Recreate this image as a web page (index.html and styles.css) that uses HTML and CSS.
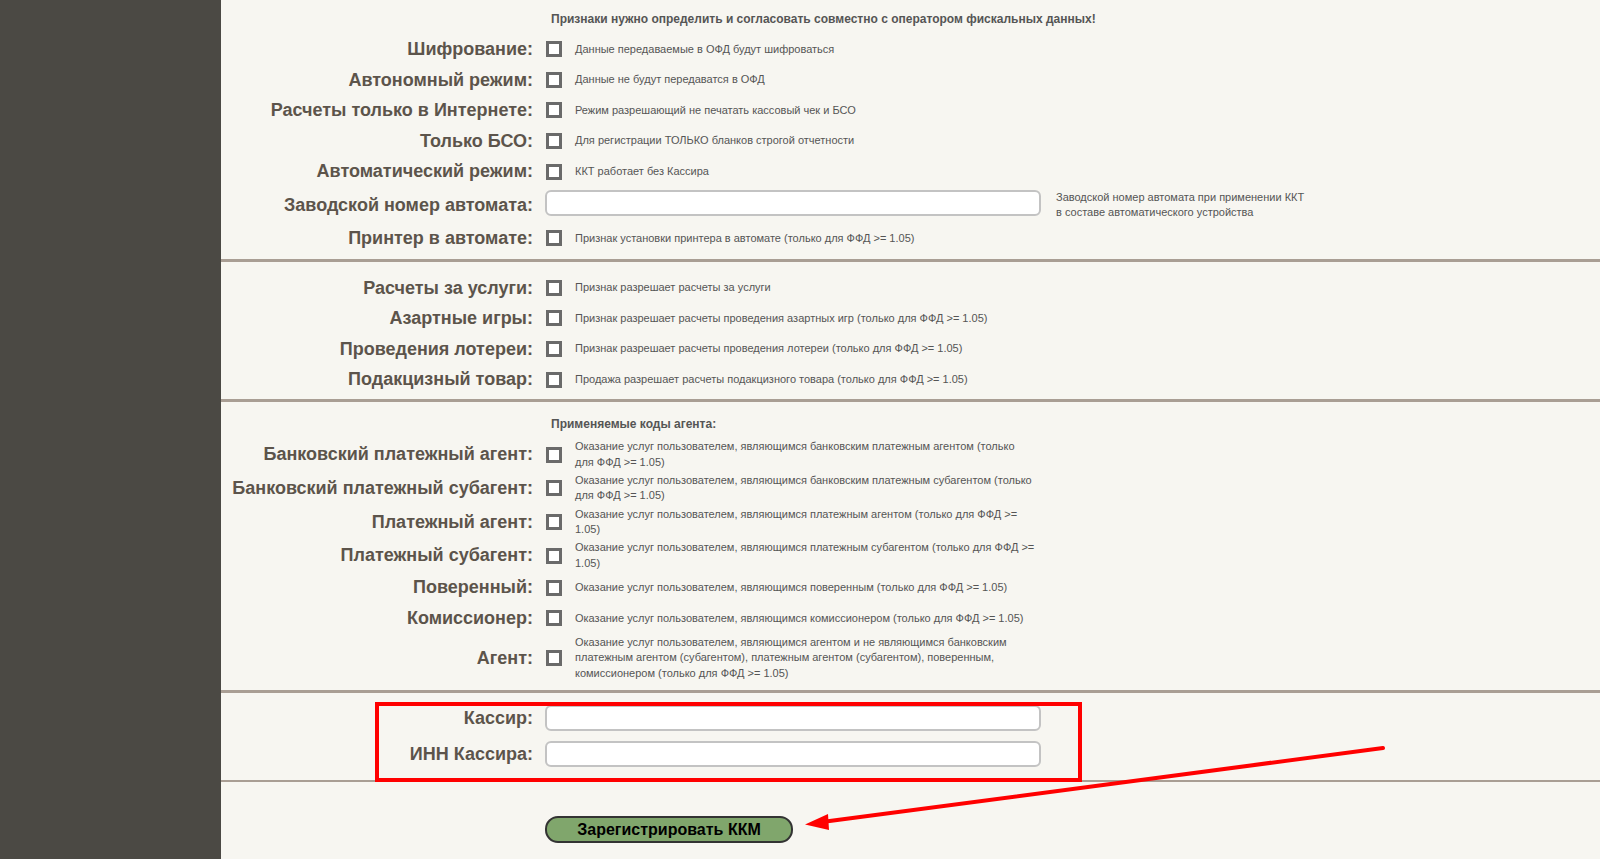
FILE: index.html
```html
<!DOCTYPE html>
<html lang="ru">
<head>
  <meta charset="UTF-8">
  <meta name="viewport" content="width=device-width, initial-scale=1.0">
  <title>Регистрация ККМ</title>
  <link rel="stylesheet" href="styles.css">
</head>
<body>
<div class="page">
  <div class="sidebar"></div>

  <div class="content">

    <div class="section first">
      <div class="row">
        <div></div>
        <div class="caption">Признаки нужно определить и согласовать совместно с оператором фискальных данных!</div>
      </div>
      <div class="row">
        <label class="label">Шифрование:</label>
        <div class="control"><input type="checkbox" class="check"><span class="desc">Данные передаваемые в ОФД будут шифроваться</span></div>
      </div>
      <div class="row">
        <label class="label">Автономный режим:</label>
        <div class="control"><input type="checkbox" class="check"><span class="desc">Данные не будут передаватся в ОФД</span></div>
      </div>
      <div class="row">
        <label class="label">Расчеты только в Интернете:</label>
        <div class="control"><input type="checkbox" class="check"><span class="desc">Режим разрешающий не печатать кассовый чек и БСО</span></div>
      </div>
      <div class="row">
        <label class="label">Только БСО:</label>
        <div class="control"><input type="checkbox" class="check"><span class="desc">Для регистрации ТОЛЬКО бланков строгой отчетности</span></div>
      </div>
      <div class="row">
        <label class="label">Автоматический режим:</label>
        <div class="control"><input type="checkbox" class="check"><span class="desc">ККТ работает без Кассира</span></div>
      </div>
      <div class="row">
        <label class="label">Заводской номер автомата:</label>
        <div class="control"><input type="text" class="field"></div>
        <div class="hint">Заводской номер автомата при применении ККТ<br>в составе автоматического устройства</div>
      </div>
      <div class="row">
        <label class="label">Принтер в автомате:</label>
        <div class="control"><input type="checkbox" class="check"><span class="desc">Признак установки принтера в автомате (только для ФФД &gt;= 1.05)</span></div>
      </div>
    </div>

    <div class="section second">
      <div class="row">
        <label class="label">Расчеты за услуги:</label>
        <div class="control"><input type="checkbox" class="check"><span class="desc">Признак разрешает расчеты за услуги</span></div>
      </div>
      <div class="row">
        <label class="label">Азартные игры:</label>
        <div class="control"><input type="checkbox" class="check"><span class="desc">Признак разрешает расчеты проведения азартных игр (только для ФФД &gt;= 1.05)</span></div>
      </div>
      <div class="row">
        <label class="label">Проведения лотереи:</label>
        <div class="control"><input type="checkbox" class="check"><span class="desc">Признак разрешает расчеты проведения лотереи (только для ФФД &gt;= 1.05)</span></div>
      </div>
      <div class="row">
        <label class="label">Подакцизный товар:</label>
        <div class="control"><input type="checkbox" class="check"><span class="desc">Продажа разрешает расчеты подакцизного товара (только для ФФД &gt;= 1.05)</span></div>
      </div>
    </div>

    <div class="section agents">
      <div class="row">
        <div></div>
        <div class="caption">Применяемые коды агента:</div>
      </div>
      <div class="row">
        <label class="label">Банковский платежный агент:</label>
        <div class="control"><input type="checkbox" class="check"><span class="desc">Оказание услуг пользователем, являющимся банковским платежным агентом (только для ФФД &gt;= 1.05)</span></div>
      </div>
      <div class="row">
        <label class="label">Банковский платежный субагент:</label>
        <div class="control"><input type="checkbox" class="check"><span class="desc">Оказание услуг пользователем, являющимся банковским платежным субагентом (только для ФФД &gt;= 1.05)</span></div>
      </div>
      <div class="row">
        <label class="label">Платежный агент:</label>
        <div class="control"><input type="checkbox" class="check"><span class="desc">Оказание услуг пользователем, являющимся платежным агентом (только для ФФД &gt;= 1.05)</span></div>
      </div>
      <div class="row">
        <label class="label">Платежный субагент:</label>
        <div class="control"><input type="checkbox" class="check"><span class="desc">Оказание услуг пользователем, являющимся платежным субагентом (только для ФФД &gt;= 1.05)</span></div>
      </div>
      <div class="row">
        <label class="label">Поверенный:</label>
        <div class="control"><input type="checkbox" class="check"><span class="desc">Оказание услуг пользователем, являющимся поверенным (только для ФФД &gt;= 1.05)</span></div>
      </div>
      <div class="row">
        <label class="label">Комиссионер:</label>
        <div class="control"><input type="checkbox" class="check"><span class="desc">Оказание услуг пользователем, являющимся комиссионером (только для ФФД &gt;= 1.05)</span></div>
      </div>
      <div class="row">
        <label class="label">Агент:</label>
        <div class="control"><input type="checkbox" class="check"><span class="desc">Оказание услуг пользователем, являющимся агентом и не являющимся банковским платежным агентом (субагентом), платежным агентом (субагентом), поверенным, комиссионером (только для ФФД &gt;= 1.05)</span></div>
      </div>
    </div>

    <div class="section cashier">
      <div class="row">
        <label class="label">Кассир:</label>
        <div class="control"><input type="text" class="field field-cashier"></div>
      </div>
      <div class="row">
        <label class="label">ИНН Кассира:</label>
        <div class="control"><input type="text" class="field field-cashier"></div>
      </div>
    </div>

    <div class="actions">
      <button class="submit">Зарегистрировать ККМ</button>
    </div>

  </div>

  <!-- red marks over the form -->
  <div class="mark-box"></div>
  <svg class="mark-arrow" width="1600" height="859" viewBox="0 0 1600 859">
    <line x1="1383" y1="748" x2="822" y2="822" stroke="#ff0000" stroke-width="4" stroke-linecap="round"/>
    <polygon points="805,824.5 828,814 829,830" fill="#ff0000"/>
  </svg>
</div>
</body>
</html>
```

FILE: styles.css
```css
body{
  margin: 0;
  background-color: #f7f6f1;
  font-family: "Liberation Sans", Arial, Helvetica, sans-serif;
}
.page{
  position: relative;
  display: flex;
  min-height: 100vh;
}
.sidebar{
  width: 221px;
  flex-shrink: 0;
  background-color: #4b4944;
}
.content{
  flex: 1;
}
.section{
  border-bottom: 3px solid #a99e94;
}
.first{
  padding-bottom: 5px;
}
.second{
  padding-top: 11px;
  padding-bottom: 4px;
}
.agents{
  padding-bottom: 8px;
}
.cashier{
  padding-top: 7px;
  padding-bottom: 8px;
  border-bottom-width: 2px;
}
.row{
  display: grid;
  grid-template-columns: 312px 496px auto;
  column-gap: 12px;
  align-items: center;
}
.caption{
  grid-column: 2 / span 2;
  color: #555;
  font-size: 12px;
  font-weight: bold;
  line-height: 15px;
  padding-left: 6px;
  white-space: nowrap;
}
.first .caption{
  padding-top: 12px;
  padding-bottom: 7px;
}
.agents .caption{
  padding-top: 15px;
  padding-bottom: 6px;
}
.label{
  text-align: right;
  color: #5c544b;
  font-size: 18px;
  font-weight: bold;
  line-height: 20.6px;
  padding: 5px 0;
  white-space: nowrap;
}
.control{
  display: flex;
  align-items: center;
}
.check{
  appearance: none;
  -webkit-appearance: none;
  width: 16px;
  height: 16px;
  margin: 0 0 0 1px;
  border: 3px solid #6a6a6a;
  background-color: #fff;
  flex-shrink: 0;
}
.desc{
  max-width: 460px;
  margin-left: 13px;
  padding: 1.5px 0;
  color: #555;
  font-size: 11px;
  line-height: 15.3px;
}
.field{
  box-sizing: border-box;
  width: 496px;
  height: 26px;
  margin: 3px 0 7px;
  border: 2px solid #c3c3c3;
  border-radius: 6px;
  background-color: #fff;
}
.field-cashier{
  margin: 5px 0 5px;
}
.hint{
  margin-left: 3px;
  color: #555;
  font-size: 11px;
  line-height: 15.3px;
}
.actions{
  padding: 34px 0 0 324px;
}
.submit{
  box-sizing: border-box;
  width: 248px;
  height: 27px;
  border: 2px solid #333;
  border-radius: 13px;
  background-color: #80a66c;
  color: #000;
  font-family: "Liberation Sans", Arial, Helvetica, sans-serif;
  font-size: 16px;
  font-weight: bold;
  cursor: pointer;
}
.mark-box{
  position: absolute;
  left: 375px;
  top: 702px;
  width: 699px;
  height: 72px;
  border: 4px solid #ff0000;
}
.mark-arrow{
  position: absolute;
  left: 0;
  top: 0;
  pointer-events: none;
}
```
